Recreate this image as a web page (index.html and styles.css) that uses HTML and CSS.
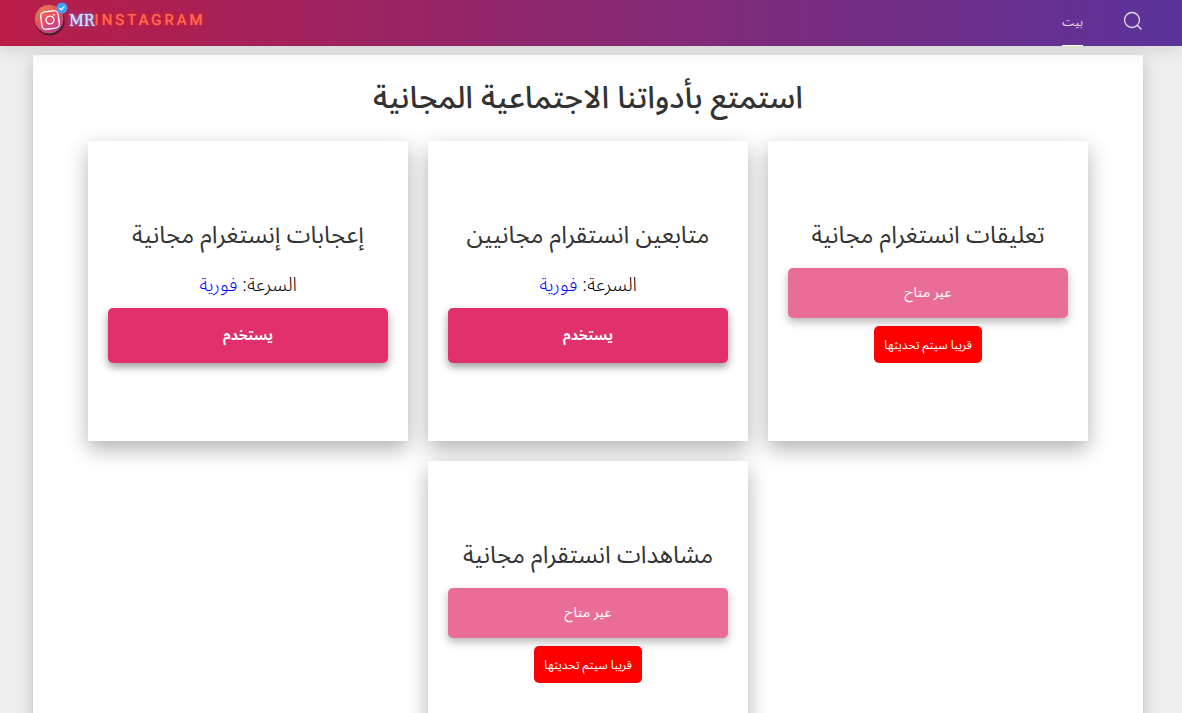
FILE: index.html
```html
<!DOCTYPE html>
<html lang="ar">
<head>
<meta charset="utf-8">
<meta name="viewport" content="width=device-width, initial-scale=1">
<title>MR INSTAGRAM</title>
<link rel="stylesheet" href="styles.css">
</head>
<body>
<header class="navbar">
  <a class="brand" href="#">
    <svg class="brand-mark" viewBox="0 0 36 36" aria-hidden="true">
      <defs>
        <linearGradient id="disc" x1="0" y1="0" x2="0.7" y2="1">
          <stop offset="0" stop-color="#e88a4c"/>
          <stop offset="0.5" stop-color="#ea5460"/>
          <stop offset="1" stop-color="#b83a9c"/>
        </linearGradient>
      </defs>
      <circle cx="17" cy="19" r="14.500" fill="#4b1b31"/>
      <circle cx="16" cy="17" r="14" fill="url(#disc)" stroke="#b9605a" stroke-width="1"/>
      <g fill="none" stroke="#fff" stroke-width="1.400" transform="rotate(-8 17 18)">
        <rect x="8.200" y="9.200" width="17.600" height="17.600" rx="4.500"/>
        <circle cx="17" cy="18" r="3.900"/>
      </g>
      <circle cx="21" cy="12.800" r="0.900" fill="#fff"/>
      <circle cx="29" cy="6" r="5.500" fill="#3da0f5"/>
      <path d="M26.500 6.200l1.800 1.700 3.200-3.800" fill="none" stroke="#fff" stroke-width="1.300"/>
    </svg>
    <span class="brand-mr">MR</span><span class="brand-name">INSTAGRAM</span>
  </a>
  <nav class="nav">
    <a class="nav-link" href="#" dir="rtl">بيت</a>
    <button class="search" type="button" aria-label="بحث">
      <svg viewBox="0 0 20 20" width="20" height="20" fill="none" stroke="currentColor" stroke-width="1.300">
        <circle cx="9" cy="9" r="7.500"/>
        <path d="M14.200 14.200l4.300 4.300"/>
      </svg>
    </button>
  </nav>
</header>
<main class="panel">
  <h1 class="title" dir="rtl">استمتع بأدواتنا الاجتماعية المجانية</h1>
  <div class="cards">
    <section class="card" dir="rtl">
      <h2 class="card-title">إعجابات إنستغرام مجانية</h2>
      <p class="speed">السرعة: <span class="speed-value">فورية</span></p>
      <button class="use" type="button">يستخدم</button>
    </section>
    <section class="card" dir="rtl">
      <h2 class="card-title">متابعين انستقرام مجانيين</h2>
      <p class="speed">السرعة: <span class="speed-value">فورية</span></p>
      <button class="use" type="button">يستخدم</button>
    </section>
    <section class="card" dir="rtl">
      <h2 class="card-title">تعليقات انستغرام مجانية</h2>
      <button class="unavailable" type="button" disabled>عير متاح</button>
      <span class="soon">قريبا سيتم تحديثها</span>
    </section>
    <section class="card" dir="rtl">
      <h2 class="card-title">مشاهدات انستقرام مجانية</h2>
      <button class="unavailable" type="button" disabled>عير متاح</button>
      <span class="soon">قريبا سيتم تحديثها</span>
    </section>
  </div>
</main>
</body>
</html>
```
FILE: styles.css
```css
* { box-sizing: border-box; }
body {
  margin: 0;
  background: #eee;
  color: #000;
  font-family: "Noto Sans", "Noto Sans Arabic", "DejaVu Sans", sans-serif;
  scrollbar-width: none;
}
html { scrollbar-width: none; }
button { font-family: inherit; border: 0; }
.navbar {
  position: relative;
  z-index: 1;
  display: flex;
  align-items: stretch;
  justify-content: space-between;
  height: 46px;
  padding: 0 39px 0 33px;
  background: linear-gradient(90deg, #b91d47, #5b339b);
  box-shadow: 0 5px 15px rgba(0, 0, 0, 0.1);
}
.brand {
  display: flex;
  align-items: center;
  padding-bottom: 6px;
  text-decoration: none;
}
.brand-mark { width: 36px; height: 36px; }
.brand-mr {
  color: #cfe2fb;
  font: 400 16px "DejaVu Serif Condensed", "DejaVu Serif", serif;
  text-shadow: 0 0 1px #cfe2fb, 0 0 5px #5a8cf0;
}
.brand-name {
  color: #ff6a4d;
  font: 400 15px Roboto, sans-serif;
  letter-spacing: 3px;
  text-shadow: 0 0 1px #ff6a4d, 0 0 5px #f01818;
}
.nav { display: flex; gap: 40px; }
.nav-link {
  display: flex;
  align-items: center;
  border-bottom: 1px solid #fff;
  color: #e6dcef;
  font-size: 12px;
  text-decoration: none;
}
.search {
  display: flex;
  align-items: center;
  padding: 0 0 4px;
  background: none;
  color: #e6dcef;
}
.panel {
  margin: 9px 39px 0 33px;
  padding: 20px 20px 40px;
  background: #fff;
  box-shadow: 0 5px 15px rgba(0, 0, 0, 0.2);
}
.title {
  margin: 0 0 24px;
  color: #333;
  font-size: 31px;
  font-weight: 500;
  line-height: 42px;
  text-align: center;
}
.cards {
  display: flex;
  flex-wrap: wrap;
  justify-content: center;
  gap: 20px;
}
.card {
  display: flex;
  flex-direction: column;
  align-items: center;
  justify-content: center;
  width: 320px;
  min-height: 300px;
  padding: 20px;
  background: #fff;
  box-shadow: 0 8px 20px rgba(0, 0, 0, 0.3);
}
.card-title {
  margin: 0 0 20px;
  color: #333;
  font-size: 24px;
  font-weight: 400;
  line-height: 28px;
}
.speed {
  margin: 0 0 8px;
  font-size: 19px;
  font-weight: 300;
  line-height: 32px;
}
.speed-value { color: #00f; }
.use, .unavailable {
  width: 100%;
  height: 55px;
  border-radius: 5px;
  background: #e1306c;
  box-shadow: 0 4px 8px rgba(0, 0, 0, 0.4);
  color: #fff;
  font-size: 14px;
  font-weight: 700;
}
.unavailable {
  height: 50px;
  opacity: 0.7;
  font-weight: 400;
}
.soon {
  margin-top: 8px;
  padding: 0 10px;
  border-radius: 5px;
  background: #f00;
  color: #fff;
  font-size: 12px;
  line-height: 37px;
}
```
